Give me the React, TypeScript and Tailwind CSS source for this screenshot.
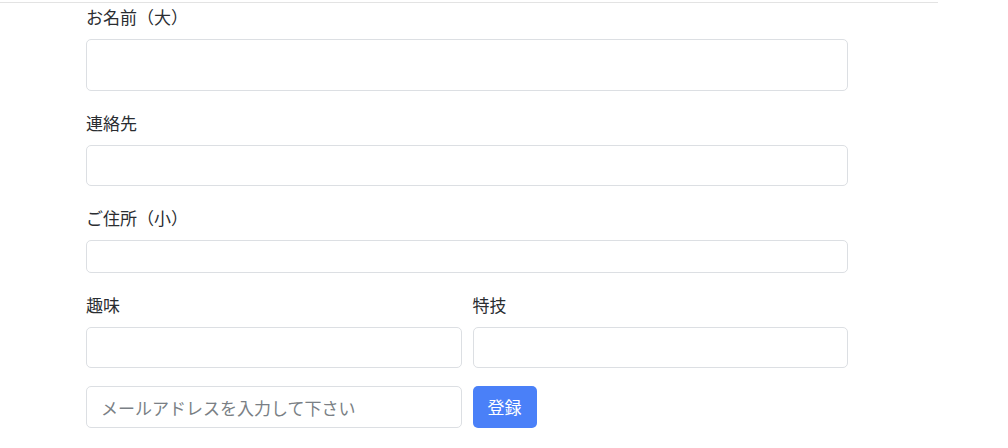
import React from "react"

const font = { fontFamily: '"Noto Sans CJK JP", "Noto Sans", sans-serif' }

function Field({ label, h, mt = "mt-[18px]" }: { label: string; h: string; mt?: string }) {
  return (
    <div className={`flex flex-col ${mt}`}>
      <label className="text-[17px] leading-[27px] text-[#2a2d31] mb-[9px]">{label}</label>
      <input className={`${h} w-full rounded-[5px] border border-[#dcdfe3] bg-white px-[15px] outline-none`} />
    </div>
  )
}

export default function App() {
  return (
    <div className="min-h-[448px] w-[1008px] bg-white" style={font}>
      <div className="mt-[2px] h-px w-[938px] bg-[#e3e3e3]" />
      <div className="ml-[86px] w-[762px] flex flex-col">
        <Field label="お名前（大）" h="h-[52px]" mt="mt-0" />
        <Field label="連絡先" h="h-[41px]" />
        <Field label="ご住所（小）" h="h-[33px]" />

        <div className="mt-[18px] grid grid-cols-2 gap-x-[11px]">
          <div className="flex flex-col">
            <label className="text-[17px] leading-[27px] text-[#2a2d31] mb-[9px]">趣味</label>
            <input className="h-[41px] w-full rounded-[5px] border border-[#dcdfe3] bg-white px-[15px] outline-none" />
          </div>
          <div className="flex flex-col">
            <label className="text-[17px] leading-[27px] text-[#2a2d31] mb-[9px]">特技</label>
            <input className="h-[41px] w-full rounded-[5px] border border-[#dcdfe3] bg-white px-[15px] outline-none" />
          </div>
        </div>

        <div className="mt-[18px] grid grid-cols-2 gap-x-[11px]">
          <input
            placeholder="メールアドレスを入力して下さい"
            className="h-[42px] w-full rounded-[5px] border border-[#dcdfe3] bg-white px-[14px] text-[17px] text-[#212529] placeholder:text-[#7a7f85] outline-none"
          />
          <div>
            <button className="h-[42px] w-[64px] rounded-[5px] bg-[#4a80f8] text-[17px] text-white">
              登録
            </button>
          </div>
        </div>
      </div>
    </div>
  )
}
